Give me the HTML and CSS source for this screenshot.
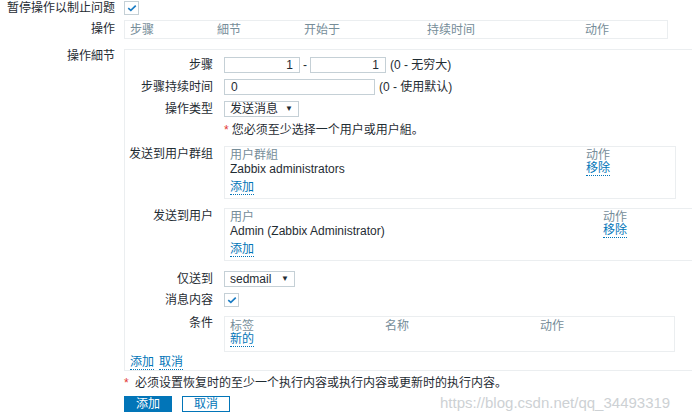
FILE: index.html
```html
<!DOCTYPE html>
<html lang="zh">
<head>
<meta charset="utf-8">
<title>操作</title>
<link rel="stylesheet" href="styles.css">
</head>
<body>
<div class="form">
  <div class="row r-pause">
    <div class="lbl">暂停操作以制止问题</div>
    <div class="field"><span class="cb"><svg viewBox="0 0 14 12" width="12" height="10"><path d="M2.5 6.2 L5.6 8.8 L11.5 3.2" fill="none" stroke="#1a7cc4" stroke-width="2"/></svg></span></div>
  </div>
  <div class="row r-ops">
    <div class="lbl">操作</div>
    <div class="field">
      <div class="box ops">
        <span class="h c1">步骤</span><span class="h c2">細节</span><span class="h c3">开始于</span><span class="h c4">持续时间</span><span class="h c5">动作</span>
      </div>
    </div>
  </div>
  <div class="row r-details">
    <div class="lbl">操作細节</div>
    <div class="field">
      <div class="details">
        <div class="drow d-step">
          <div class="dl">步骤</div>
          <div class="dc">
            <span class="inp num">1</span><span class="dash">-</span><span class="inp num">1</span><span class="hint">(0 - 无穷大)</span>
          </div>
        </div>
        <div class="drow d-dur">
          <div class="dl">步骤持续时间</div>
          <div class="dc"><span class="inp wide">0</span><span class="hint">(0 - 使用默认)</span></div>
        </div>
        <div class="drow d-type">
          <div class="dl">操作类型</div>
          <div class="dc"><span class="sel s-type">发送消息<i class="arr">▼</i></span></div>
        </div>
        <div class="drow d-warn">
          <div class="dl"></div>
          <div class="dc"><span class="req">*</span> 您必须至少选择一个用户或用户組。</div>
        </div>
        <div class="drow d-groups">
          <div class="dl">发送到用户群组</div>
          <div class="dc">
            <div class="box list list1">
              <div class="lr"><span class="col1 h">用户群組</span><span class="h">动作</span></div>
              <div class="lr"><span class="col1">Zabbix administrators</span><span class="link">移除</span></div>
              <div class="lr add"><span class="link">添加</span></div>
            </div>
          </div>
        </div>
        <div class="drow d-users">
          <div class="dl">发送到用户</div>
          <div class="dc">
            <div class="box list list2">
              <div class="lr"><span class="col1 h">用户</span><span class="h">动作</span></div>
              <div class="lr"><span class="col1">Admin (Zabbix Administrator)</span><span class="link">移除</span></div>
              <div class="lr add"><span class="link">添加</span></div>
            </div>
          </div>
        </div>
        <div class="drow d-only">
          <div class="dl">仅送到</div>
          <div class="dc"><span class="sel s-media">sedmail<i class="arr">▼</i></span></div>
        </div>
        <div class="drow d-msg">
          <div class="dl">消息内容</div>
          <div class="dc"><span class="cb"><svg viewBox="0 0 14 12" width="12" height="10"><path d="M2.5 6.2 L5.6 8.8 L11.5 3.2" fill="none" stroke="#1a7cc4" stroke-width="2"/></svg></span></div>
        </div>
        <div class="drow d-cond">
          <div class="dl">条件</div>
          <div class="dc">
            <div class="box cond">
              <div class="lr"><span class="k1 h">标签</span><span class="k2 h">名称</span><span class="h">动作</span></div>
              <div class="lr"><span class="link">新的</span></div>
            </div>
          </div>
        </div>
        <div class="actions"><span class="link">添加</span><span class="link">取消</span></div>
      </div>
    </div>
  </div>
  <div class="row r-note">
    <div class="lbl"></div>
    <div class="field"><span class="req">*</span> 必须设置恢复时的至少一个执行内容或执行内容或更新时的执行内容。</div>
  </div>
  <div class="row r-btns">
    <div class="lbl"></div>
    <div class="field btns"><span class="btn primary">添加</span><span class="btn alt">取消</span></div>
  </div>
</div>
<div class="watermark">https://blog.csdn.net/qq_34493319</div>
</body>
</html>
```

FILE: styles.css
```css
html, body {
  margin: 0;
  padding: 0;
  background: #ffffff;
}
body {
  position: relative;
  width: 692px;
  height: 413px;
  overflow: hidden;
  font-family: "Liberation Sans", Arial, "Noto Sans CJK SC", sans-serif;
  font-size: 12px;
  line-height: 14px;
  color: #1f2c33;
}
.form {
  display: flex;
  flex-direction: column;
}
.row {
  display: grid;
  grid-template-columns: 115px 1fr;
  column-gap: 9px;
  align-items: start;
}
.lbl {
  text-align: right;
  white-space: nowrap;
}
.r-pause { height: 16px; }
.r-pause .lbl { padding-top: 1px; }
.r-pause .field { padding-top: 1px; }
.cb {
  display: inline-flex;
  align-items: center;
  justify-content: center;
  width: 13px;
  height: 12px;
  border: 1px solid #c5d0d6;
  background: #fff;
  box-sizing: content-box;
}
.r-ops { margin-top: 4px; }
.r-ops .lbl { padding-top: 2px; }
.box {
  border: 1px solid #ebeef0;
  background: #fff;
}
.ops {
  display: flex;
  height: 17px;
  align-items: center;
  width: 537px;
  padding-left: 5px;
}
.h { color: #768d99; }
.ops .c1 { width: 87px; }
.ops .c2 { width: 87px; }
.ops .c3 { width: 123px; }
.ops .c4 { width: 158px; }

.r-details { margin-top: 10px; }
.r-details .lbl { padding-top: 0px; }
.details {
  border-top: 1px solid #ebeef0;
  border-left: 1px solid #ebeef0;
  border-bottom: 1px solid #ebeef0;
  width: 600px;
  height: 322px;
  box-sizing: border-box;
  padding-top: 7px;
  display: flex;
  flex-direction: column;
}
.drow {
  display: grid;
  grid-template-columns: 88px 1fr;
  column-gap: 11px;
  align-items: start;
}
.dl {
  text-align: right;
  white-space: nowrap;
}
.dc {
  display: flex;
  align-items: center;
  white-space: nowrap;
}
.d-step .dl, .d-dur .dl, .d-type .dl, .d-only .dl { padding-top: 1px; }
.inp {
  display: inline-block;
  height: 14px;
  line-height: 14px;
  border: 1px solid #c5d0d6;
  background: #fff;
  padding: 0 6px;
}
.inp.num { width: 62px; text-align: right; }
.inp.wide { width: 137px; }
.dash { width: 10px; text-align: center; }
.hint { margin-left: 4px; }
.d-dur { margin-top: 6px; }
.d-type { margin-top: 6px; }
.sel {
  display: inline-flex;
  align-items: center;
  justify-content: space-between;
  height: 14px;
  border: 1px solid #c5d0d6;
  background: #fff;
  padding: 0 5px 0 5px;
}
.s-type { width: 63px; }
.s-media { width: 59px; }
.arr {
  font-style: normal;
  font-size: 8px;
  color: #1f2c33;
}
.d-warn { margin-top: 6px; }
.req { color: #e33734; margin-right: 3px; }
.d-groups { margin-top: 9px; }
.d-users { margin-top: 9px; }
.d-groups .dl, .d-users .dl { padding-top: 1px; }
.list {
  box-sizing: border-box;
  height: 53px;
  padding: 1px 5px 0 5px;
}
.list1 { width: 452px; }
.list2 { width: 480px; }
.lr { display: flex; align-items: center; height: 14px; }
.lr.add { margin-top: 4px; height: 16px; }
.list1 .col1 { width: 356px; }
.list2 .col1 { width: 373px; }
.link {
  color: #0275b8;
  border-bottom: 1px dotted #0275b8;
  line-height: 13px;
}
.d-only { margin-top: 10px; }
.d-msg { margin-top: 6px; }
.d-msg .dl { padding-top: 0px; }
.d-cond { margin-top: 9px; }
.cond {
  box-sizing: border-box;
  width: 451px;
  height: 36px;
  padding: 2px 5px 0 5px;
}
.cond .k1 { width: 155px; }
.cond .k2 { width: 155px; }
.actions {
  margin-top: 4px;
  padding-left: 5px;
  display: flex;
  gap: 5px;
}
.r-note { margin-top: 5px; }
.r-btns { margin-top: 6px; }
.btns { display: flex; gap: 10px; }
.btn {
  display: inline-flex;
  align-items: center;
  justify-content: center;
  box-sizing: border-box;
  height: 16px;
  width: 48px;
  border: 1px solid #0275b8;
}
.btn.primary { background: #0275b8; color: #fff; }
.btn.alt { background: #fff; color: #0275b8; }
.watermark {
  position: absolute;
  left: 440px;
  top: 394px;
  font-size: 15px;
  line-height: 18px;
  color: #cdd1d4;
  white-space: nowrap;
}
```
